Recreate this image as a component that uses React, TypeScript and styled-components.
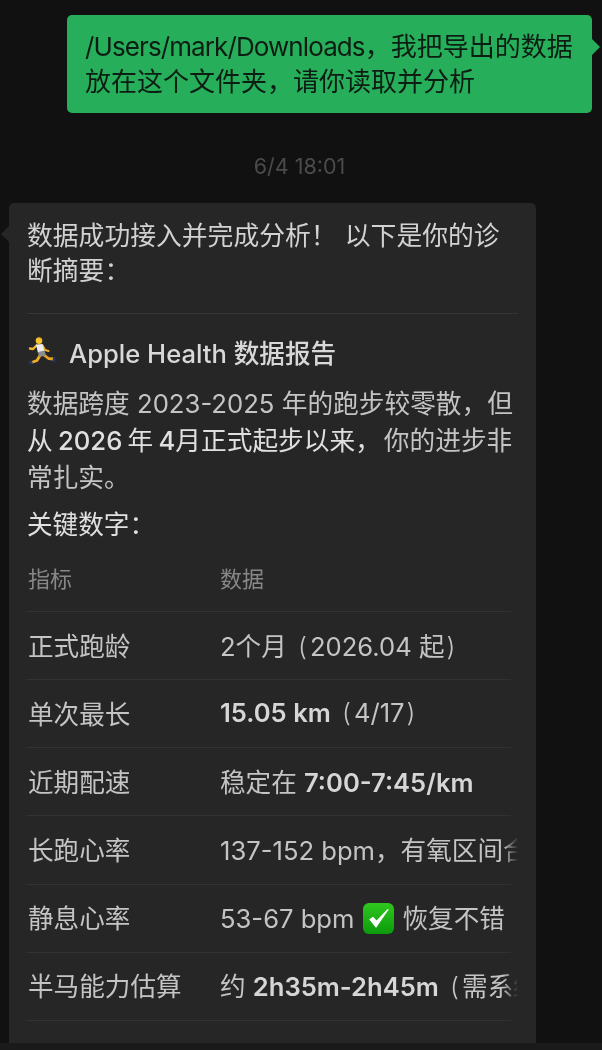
import React from "react";
import styled, { createGlobalStyle } from "styled-components";

const Global = createGlobalStyle`
  html, body { margin: 0; padding: 0; background: #111111; }
  * { box-sizing: border-box; }
`;

const Page = styled.div`
  width: 602px;
  height: 1050px;
  display: flex;
  flex-direction: column;
  overflow: hidden;
  background: #111111;
  font-family: "Inter", "Noto Sans CJK SC", sans-serif;
  font-size: 25.6px;
  color: #d2d2d2;
  filter: blur(0.35px);
`;

const Chat = styled.div`
  flex: 1;
  min-height: 0;
  overflow: hidden;
  display: flex;
  flex-direction: column;
  padding-top: 15px;
  & > * {
    flex: none;
  }
`;

const Footer = styled.div`
  flex: none;
  height: 7px;
  background: #1a1a1a;
`;

const OutRow = styled.div`
  display: flex;
  justify-content: flex-end;
  padding-right: 10px;
`;

const OutBubble = styled.div`
  position: relative;
  width: 525px;
  height: 98px;
  padding: 14px 18px 0;
  background: #27ae5a;
  border-radius: 5px;
  color: #0d1d13;
  font-size: 26px;
  line-height: 35px;
  white-space: nowrap;
  &::after {
    content: "";
    position: absolute;
    right: -8px;
    top: 24px;
    border-left: 8px solid #27ae5a;
    border-top: 8px solid transparent;
    border-bottom: 8px solid transparent;
  }
`;

const Latin = styled.span`
  letter-spacing: -0.9px;
`;

const Time = styled.div`
  height: 90px;
  padding-top: 40px;
  text-align: center;
  padding-right: 3px;
  font-size: 21.5px;
  line-height: 27px;
  color: #4b4b4b;
`;

const InRow = styled.div`
  padding-left: 9px;
`;

const InBubble = styled.div`
  position: relative;
  width: 527px;
  padding: 15px 18px 0 18px;
  background: #262626;
  border-radius: 5px;
  &::before {
    content: "";
    position: absolute;
    left: -8px;
    top: 23px;
    border-right: 8px solid #262626;
    border-top: 8px solid transparent;
    border-bottom: 8px solid transparent;
  }
`;

const Para = styled.p`
  margin: 0;
  font-size: 25.8px;
  line-height: 35px;
  color: #d2d2d2;
  white-space: nowrap;
  word-spacing: 1px;
`;

const Rule = styled.hr`
  margin: 25px 0 0;
  width: 491px;
  height: 1px;
  border: 0;
  background: #353535;
`;

const Heading = styled.h2`
  margin: 21px 0 0;
  display: flex;
  align-items: center;
  gap: 12px;
  height: 32px;
  font-size: 25.6px;
  font-weight: 500;
  color: #d8d8d8;
`;

const Body = styled.p`
  margin: 18px 0 0;
  font-size: 25.7px;
  line-height: 37px;
  color: #c4c4c4;
  white-space: nowrap;
`;

const Strong = styled.strong`
  font-weight: 400;
  color: #e0e0e0;
  word-spacing: -2px;
  margin-right: 3px;
`;

const Figure = styled.span`
  font-weight: 500;
`;

const KeyTitle = styled.p`
  margin: 10px 0 0;
  line-height: 37px;
  font-weight: 400;
  color: #e0e0e0;
`;

const TableClip = styled.div`
  width: 491px;
  overflow: hidden;
  margin-top: 16px;
  mask-image: linear-gradient(to right, #000 0, #000 476px, transparent 491px);
`;

const Row = styled.div<{ $head?: boolean }>`
  height: ${(p) => (p.$head ? "53px" : "68.15px")};
  display: flex;
  align-items: center;
  white-space: nowrap;
  border-bottom: 1px solid #333333;
  padding-bottom: ${(p) => (p.$head ? "17px" : "3px")};
  font-size: ${(p) => (p.$head ? "22px" : "25.6px")};
  color: ${(p) => (p.$head ? "#878787" : "#c4c4c4")};
  font-weight: 400;
`;

const NameCell = styled.span`
  flex: none;
  width: 193px;
  padding-left: 1px;
`;

const ValueCell = styled.span`
  display: block;
`;

const Bold = styled.strong`
  font-weight: 600;
  color: #d6d6d6;
`;

const Paren = styled.span<{ $close?: boolean }>`
  font-weight: 300;
  margin: ${(p) => (p.$close ? "0 0 0 2px" : "0 3px 0 4px")};
`;

const CheckSvg = styled.svg`
  margin: 0 8px 0 9px;
  vertical-align: -6px;
`;

const RunnerSvg = styled.svg`
  flex: none;
`;

const Runner = () => (
  <RunnerSvg width="30" height="30" viewBox="0 0 30 30">
    <path d="M9.5 9.5L6 13l-3-.5" stroke="#f5b62a" strokeWidth="2.4" fill="none" strokeLinecap="round" strokeLinejoin="round" />
    <path d="M15.5 9.5l2.5 4.5 3.5 1" stroke="#f0ad24" strokeWidth="2.2" fill="none" strokeLinecap="round" strokeLinejoin="round" />
    <path d="M13 19.5l-3 5-5.5 2" stroke="#f0ad24" strokeWidth="2.8" fill="none" strokeLinecap="round" strokeLinejoin="round" />
    <path d="M17 19l4.5 3.5 5 .5" stroke="#e9a520" strokeWidth="2.8" fill="none" strokeLinecap="round" strokeLinejoin="round" />
    <path d="M9 8.5l6.5-.5 2 7.5-6.5 1.5z" fill="#ececec" />
    <path d="M11 16l6.5-1.5 1.5 5-7 1.5z" fill="#8d8d8d" />
    <circle cx="12" cy="4.7" r="3.3" fill="#f8c42e" />
    <path d="M10 1.8c2-1.4 5-.6 5.3 2.2l-2.8-1.2z" fill="#e89a1c" />
    <path d="M2 25.6l3-.6 1 2.8-3.8.6z" fill="#24386e" />
    <path d="M26 21l2.4.3-.6 5.2-2.2-.8z" fill="#24386e" />
  </RunnerSvg>
);

const Check = () => (
  <CheckSvg width="31" height="31" viewBox="0 0 31 31">
    <defs>
      <linearGradient id="chk" x1="0" y1="0" x2="0" y2="1">
        <stop offset="0" stopColor="#2fc81e" />
        <stop offset="1" stopColor="#0c9a0c" />
      </linearGradient>
    </defs>
    <rect x="0" y="0" width="31" height="31" rx="6" fill="url(#chk)" />
    <path d="M7 16.5l6 7.5L25 6.5 13.5 18.5 10 14.5z" fill="#ffffff" stroke="#ffffff" strokeWidth="1.2" strokeLinejoin="round" />
  </CheckSvg>
);

export default function App() {
  return (
    <Page>
      <Global />
      <Chat>
        <OutRow>
          <OutBubble>
            <Latin>/Users/mark/Downloads</Latin>，我把导出的数据
            <br />
            放在这个文件夹，请你读取并分析
          </OutBubble>
        </OutRow>
        <Time>6/4 18:01</Time>
        <InRow>
          <InBubble>
            <Para>
              数据成功接入并完成分析！ 以下是你的诊
              <br />
              断摘要：
            </Para>
            <Rule />
            <Heading>
              <Runner />
              Apple Health 数据报告
            </Heading>
            <Body>
              数据跨度 2023-2025 年的跑步较零散，但
              <br />
              <Strong>
                从 <Figure>2026</Figure> 年 <Figure>4</Figure>月正式起步以来，
              </Strong>
              你的进步非
              <br />
              常扎实。
            </Body>
            <KeyTitle>关键数字：</KeyTitle>
            <TableClip>
              <Row $head>
                <NameCell>指标</NameCell>
                <ValueCell>数据</ValueCell>
              </Row>
              <Row>
                <NameCell>正式跑龄</NameCell>
                <ValueCell>
                  2个月 <Paren>(</Paren>2026.04 起<Paren $close>)</Paren>
                </ValueCell>
              </Row>
              <Row>
                <NameCell>单次最长</NameCell>
                <ValueCell>
                  <Bold>15.05 km</Bold> <Paren>(</Paren>4/17<Paren $close>)</Paren>
                </ValueCell>
              </Row>
              <Row>
                <NameCell>近期配速</NameCell>
                <ValueCell>
                  稳定在 <Bold>7:00-7:45/km</Bold>
                </ValueCell>
              </Row>
              <Row>
                <NameCell>长跑心率</NameCell>
                <ValueCell>137-152 bpm，有氧区间合理</ValueCell>
              </Row>
              <Row>
                <NameCell>静息心率</NameCell>
                <ValueCell>
                  53-67 bpm
                  <Check />
                  恢复不错
                </ValueCell>
              </Row>
              <Row>
                <NameCell>半马能力估算</NameCell>
                <ValueCell>
                  约 <Bold>2h35m-2h45m</Bold> <Paren>(</Paren>需系统训练<Paren $close>)</Paren>
                </ValueCell>
              </Row>
            </TableClip>
            <Para>&nbsp;</Para>
          </InBubble>
        </InRow>
      </Chat>
      <Footer />
    </Page>
  );
}
